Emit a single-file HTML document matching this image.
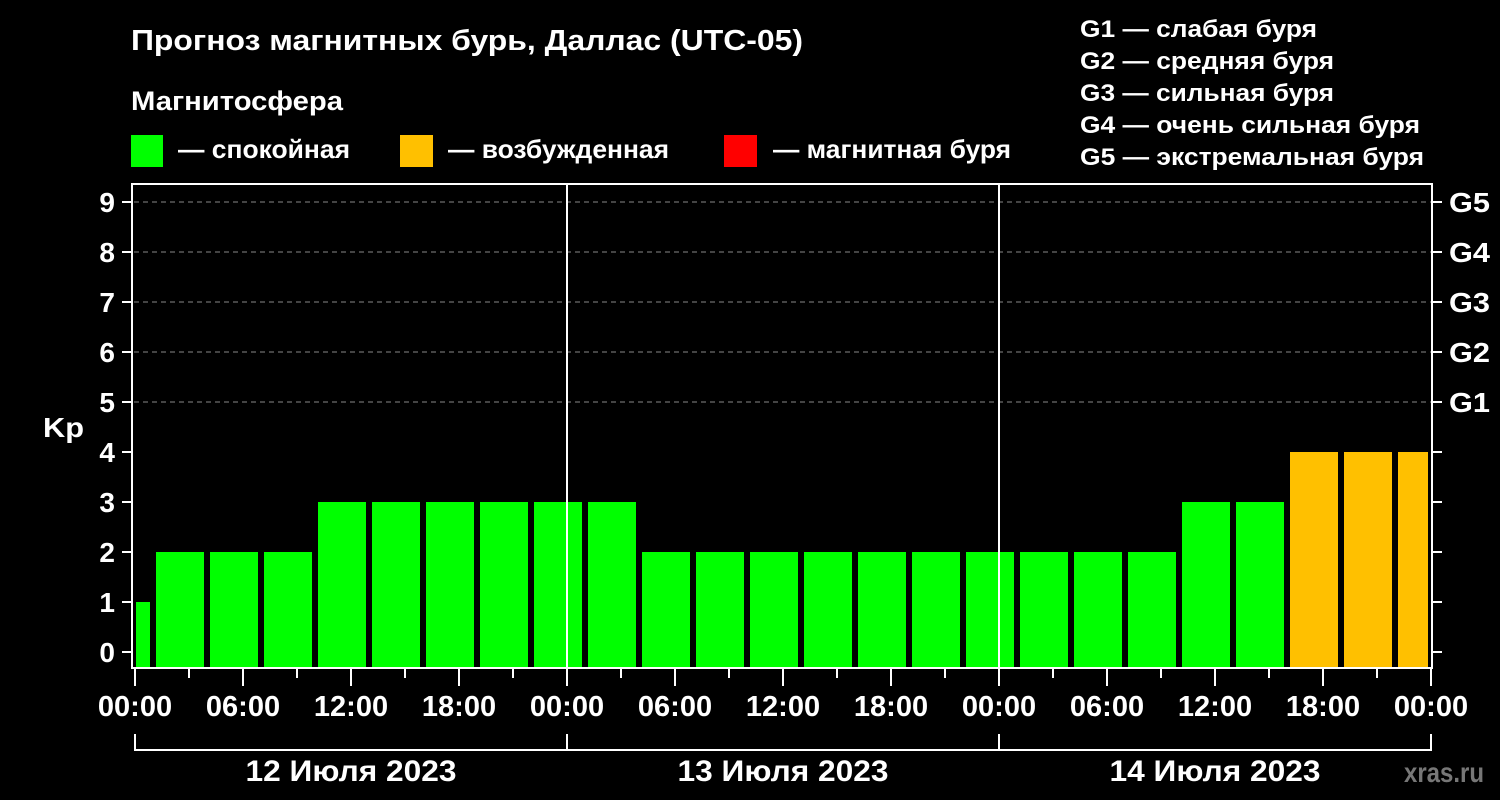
<!DOCTYPE html>
<html><head><meta charset="utf-8"><style>
html,body{margin:0;padding:0;background:#000;}
svg{display:block;font-family:"Liberation Sans",sans-serif;font-weight:bold;}
</style></head><body>
<svg width="1500" height="800" viewBox="0 0 1500 800" xmlns="http://www.w3.org/2000/svg">
<rect width="1500" height="800" fill="#000"/>
<g fill="#fff">
<text x="131" y="50" font-size="29" textLength="672" lengthAdjust="spacingAndGlyphs">Прогноз магнитных бурь, Даллас (UTC-05)</text>
<text x="131" y="110" font-size="27" textLength="212" lengthAdjust="spacingAndGlyphs">Магнитосфера</text>
<text x="178" y="158" font-size="26" textLength="172" lengthAdjust="spacingAndGlyphs">— спокойная</text>
<text x="448" y="158" font-size="26" textLength="221" lengthAdjust="spacingAndGlyphs">— возбужденная</text>
<text x="773" y="158" font-size="26" textLength="238" lengthAdjust="spacingAndGlyphs">— магнитная буря</text>
<g font-size="24">
<text x="1080" y="37" textLength="237" lengthAdjust="spacingAndGlyphs">G1 — слабая буря</text>
<text x="1080" y="69" textLength="254" lengthAdjust="spacingAndGlyphs">G2 — средняя буря</text>
<text x="1080" y="101" textLength="254" lengthAdjust="spacingAndGlyphs">G3 — сильная буря</text>
<text x="1080" y="133" textLength="340" lengthAdjust="spacingAndGlyphs">G4 — очень сильная буря</text>
<text x="1080" y="165" textLength="344" lengthAdjust="spacingAndGlyphs">G5 — экстремальная буря</text>
</g>
</g>
<rect x="131" y="135" width="32" height="32" fill="#00ff00"/>
<rect x="400" y="135" width="33" height="32" fill="#ffc000"/>
<rect x="724" y="135" width="33" height="32" fill="#ff0000"/>

<g stroke="#888" stroke-width="1" stroke-dasharray="5,4">
<line x1="134" y1="202" x2="1431" y2="202"/>
<line x1="134" y1="252" x2="1431" y2="252"/>
<line x1="134" y1="302" x2="1431" y2="302"/>
<line x1="134" y1="352" x2="1431" y2="352"/>
<line x1="134" y1="402" x2="1431" y2="402"/>
</g>

<g fill="#00ff00">
<rect x="136" y="602" width="14" height="66"/>
<rect x="156" y="552" width="48" height="116"/>
<rect x="210" y="552" width="48" height="116"/>
<rect x="264" y="552" width="48" height="116"/>
<rect x="318" y="502" width="48" height="166"/>
<rect x="372" y="502" width="48" height="166"/>
<rect x="426" y="502" width="48" height="166"/>
<rect x="480" y="502" width="48" height="166"/>
<rect x="534" y="502" width="48" height="166"/>
<rect x="588" y="502" width="48" height="166"/>
<rect x="642" y="552" width="48" height="116"/>
<rect x="696" y="552" width="48" height="116"/>
<rect x="750" y="552" width="48" height="116"/>
<rect x="804" y="552" width="48" height="116"/>
<rect x="858" y="552" width="48" height="116"/>
<rect x="912" y="552" width="48" height="116"/>
<rect x="966" y="552" width="48" height="116"/>
<rect x="1020" y="552" width="48" height="116"/>
<rect x="1074" y="552" width="48" height="116"/>
<rect x="1128" y="552" width="48" height="116"/>
<rect x="1182" y="502" width="48" height="166"/>
<rect x="1236" y="502" width="48" height="166"/>
</g>
<g fill="#ffc000">
<rect x="1290" y="452" width="48" height="216"/>
<rect x="1344" y="452" width="48" height="216"/>
<rect x="1398" y="452" width="30" height="216"/>
</g>

<g stroke="#fff" stroke-width="2" fill="none">
<line x1="132" y1="183" x2="132" y2="669"/>
<line x1="131" y1="184" x2="1432" y2="184"/>
<line x1="131" y1="668" x2="1432" y2="668"/>
<line x1="1432" y1="183" x2="1432" y2="669"/>
<line x1="567" y1="183" x2="567" y2="668"/>
<line x1="999" y1="183" x2="999" y2="668"/>
<path d="M122 202H131M122 252H131M122 302H131M122 352H131M122 402H131M122 452H131M122 502H131M122 552H131M122 602H131M122 652H131"/>
<path d="M1433 202H1442M1433 252H1442M1433 302H1442M1433 352H1442M1433 402H1442M1433 452H1442M1433 502H1442M1433 552H1442M1433 602H1442M1433 652H1442"/>
<path d="M135 669V686M243 669V686M351 669V686M459 669V686M567 669V686M675 669V686M783 669V686M891 669V686M999 669V686M1107 669V686M1215 669V686M1323 669V686M1431 669V686"/>
<path d="M189 669V678M297 669V678M405 669V678M513 669V678M621 669V678M729 669V678M837 669V678M945 669V678M1053 669V678M1161 669V678M1269 669V678M1377 669V678"/>
<path d="M135 734V750H1431V734M567 734V750M999 734V750"/>
</g>

<g fill="#fff" font-size="28" text-anchor="end">
<text x="115" y="212">9</text>
<text x="115" y="262">8</text>
<text x="115" y="312">7</text>
<text x="115" y="362">6</text>
<text x="115" y="412">5</text>
<text x="115" y="462">4</text>
<text x="115" y="512">3</text>
<text x="115" y="562">2</text>
<text x="115" y="612">1</text>
<text x="115" y="662">0</text>
</g>
<g fill="#fff" font-size="28">
<text x="43" y="437" textLength="41" lengthAdjust="spacingAndGlyphs">Kp</text>
<text x="1449" y="212" textLength="41" lengthAdjust="spacingAndGlyphs">G5</text>
<text x="1449" y="262" textLength="41" lengthAdjust="spacingAndGlyphs">G4</text>
<text x="1449" y="312" textLength="41" lengthAdjust="spacingAndGlyphs">G3</text>
<text x="1449" y="362" textLength="41" lengthAdjust="spacingAndGlyphs">G2</text>
<text x="1449" y="412" textLength="41" lengthAdjust="spacingAndGlyphs">G1</text>
</g>
<g fill="#fff" font-size="29" text-anchor="middle">
<text x="135" y="716">00:00</text>
<text x="243" y="716">06:00</text>
<text x="351" y="716">12:00</text>
<text x="459" y="716">18:00</text>
<text x="567" y="716">00:00</text>
<text x="675" y="716">06:00</text>
<text x="783" y="716">12:00</text>
<text x="891" y="716">18:00</text>
<text x="999" y="716">00:00</text>
<text x="1107" y="716">06:00</text>
<text x="1215" y="716">12:00</text>
<text x="1323" y="716">18:00</text>
<text x="1431" y="716">00:00</text>
<text x="351" y="781" font-size="30" textLength="211" lengthAdjust="spacingAndGlyphs">12 Июля 2023</text>
<text x="783" y="781" font-size="30" textLength="211" lengthAdjust="spacingAndGlyphs">13 Июля 2023</text>
<text x="1215" y="781" font-size="30" textLength="211" lengthAdjust="spacingAndGlyphs">14 Июля 2023</text>
</g>
<text x="1404" y="782" font-size="28" fill="#777" textLength="80" lengthAdjust="spacingAndGlyphs">xras.ru</text>
</svg>
</body></html>
